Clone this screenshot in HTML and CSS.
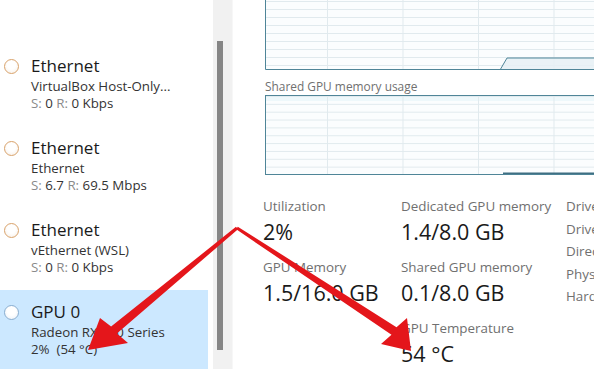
FILE: index.html
```html
<!DOCTYPE html>
<html lang="en">
<head>
    <meta charset="UTF-8">
    <meta name="viewport" content="width=device-width, initial-scale=1.0">
    <title>Task Manager - GPU</title>
    <link rel="stylesheet" href="styles.css">
</head>
<body>
    <div class="window">
        <!-- Device list -->
        <div class="sidebar">
            <div class="item">
                <span class="dot"></span>
                <div class="info">
                    <div class="name">Ethernet</div>
                    <div class="sub">VirtualBox Host-Only...</div>
                    <div class="sub"><span class="key">S:</span> 0 <span class="key">R:</span> 0 Kbps</div>
                </div>
            </div>
            <div class="item">
                <span class="dot"></span>
                <div class="info">
                    <div class="name">Ethernet</div>
                    <div class="sub">Ethernet</div>
                    <div class="sub"><span class="key">S:</span> 6.7 <span class="key">R:</span> 69.5 Mbps</div>
                </div>
            </div>
            <div class="item">
                <span class="dot"></span>
                <div class="info">
                    <div class="name">Ethernet</div>
                    <div class="sub">vEthernet (WSL)</div>
                    <div class="sub"><span class="key">S:</span> 0 <span class="key">R:</span> 0 Kbps</div>
                </div>
            </div>
            <div class="item selected">
                <span class="dot gpu"></span>
                <div class="info">
                    <div class="name">GPU 0</div>
                    <div class="sub">Radeon RX 580 Series</div>
                    <div class="sub">2%&nbsp; (54 °C)</div>
                </div>
            </div>
        </div>

        <div class="scrollbar"><div class="thumb"></div></div>

        <!-- GPU details -->
        <div class="details">
            <div class="graph first">
                <svg width="360" height="71" viewBox="0 0 360 71">
                    <defs>
                        <pattern id="grid1" patternUnits="userSpaceOnUse" x="62" y="1" width="75.5" height="8">
                            <path d="M0.5 0 V8 M0 0.5 H75.5" stroke="#e1eaee" stroke-width="1" fill="none"/>
                        </pattern>
                    </defs>
                    <rect x="0" y="0" width="360" height="70" fill="#fbfdfe"/>
                    <rect x="0" y="0" width="360" height="70" fill="url(#grid1)"/>
                    <polygon points="235,70 242,58 360,58 360,70" fill="#e6f0f5" fill-opacity="0.85"/>
                    <polyline points="235,70 242,58 360,58" fill="none" stroke="#4f8598" stroke-width="1"/>
                    <path d="M0.5 0 V69.5 H360" fill="none" stroke="#4f8598" stroke-width="1"/>
                </svg>
            </div>
            <div class="graph-label">Shared GPU memory usage</div>
            <div class="graph">
                <svg width="360" height="81" viewBox="0 0 360 81">
                    <defs>
                        <pattern id="grid2" patternUnits="userSpaceOnUse" x="62" y="1" width="75.5" height="7.85">
                            <path d="M0.5 0 V8 M0 0.5 H75.5" stroke="#e1eaee" stroke-width="1" fill="none"/>
                        </pattern>
                    </defs>
                    <rect x="0" y="0" width="360" height="80" fill="#fbfdfe"/>
                    <rect x="0" y="0" width="360" height="6" fill="#eef8fb"/>
                    <rect x="0" y="0" width="360" height="80" fill="url(#grid2)"/>
                    <line x1="238" y1="78.5" x2="360" y2="78.5" stroke="#3f6f82" stroke-width="2"/>
                    <rect x="0.5" y="0.5" width="380" height="79" fill="none" stroke="#4f8598" stroke-width="1"/>
                </svg>
            </div>

            <div class="stats">
                <div class="col first-col">
                    <div class="stat">
                        <div class="label">Utilization</div>
                        <div class="value">2%</div>
                    </div>
                    <div class="stat">
                        <div class="label">GPU Memory</div>
                        <div class="value">1.5/16.0 GB</div>
                    </div>
                </div>
                <div class="col second-col">
                    <div class="stat">
                        <div class="label">Dedicated GPU memory</div>
                        <div class="value">1.4/8.0 GB</div>
                    </div>
                    <div class="stat">
                        <div class="label">Shared GPU memory</div>
                        <div class="value">0.1/8.0 GB</div>
                    </div>
                    <div class="stat">
                        <div class="label">GPU Temperature</div>
                        <div class="value">54 °C</div>
                    </div>
                </div>
                <div class="props">
                    <div>Driver version:</div>
                    <div>Driver date:</div>
                    <div>DirectX version:</div>
                    <div>Physical location:</div>
                    <div>Hardware reserved memory:</div>
                </div>
            </div>
        </div>

        <!-- Annotation arrows drawn over the screenshot -->
        <svg class="arrows" width="594" height="369" viewBox="0 0 594 369">
            <polygon points="238,229.2 116.9,333.5 128,343 88,350 100,318 111.1,326.5 236,226.8" fill="#e4161b"/>
            <polygon points="237.8,226.7 396.5,327.2 407,318 411,351 381,344 391.5,334.8 236.2,229.3" fill="#e4161b"/>
        </svg>
    </div>
</body>
</html>
```

FILE: styles.css
```css
body {
    margin: 0;
    font-family: "Open Sans", "Noto Sans", sans-serif;
    background: #fff;
    color: #1a1a1a;
}
.window {
    position: relative;
    display: flex;
    width: 594px;
    height: 369px;
    overflow: hidden;
}
.sidebar {
    width: 213px;
    flex-shrink: 0;
    padding-top: 44px;
    box-sizing: border-box;
}
.item {
    display: flex;
    width: 208px;
    height: 82px;
    padding-top: 10px;
    box-sizing: border-box;
}
.item.selected {
    background: #cce8ff;
}
.dot {
    width: 13px;
    height: 13px;
    margin: 5px 0 0 4px;
    border: 1.5px solid #d9a36c;
    border-radius: 50%;
    background: radial-gradient(circle at 50% 40%, #fff 40%, #f6ede3 100%);
    flex-shrink: 0;
}
.dot.gpu {
    border-color: #8aaed0;
    background: radial-gradient(circle at 50% 40%, #fff 40%, #e7eef6 100%);
}
.info {
    margin-left: 12px;
}
.name {
    font-size: 17px;
    line-height: 24px;
    color: #1a1a1a;
}
.sub {
    font-size: 13.3px;
    line-height: 17px;
    color: #333;
    white-space: nowrap;
}
.key {
    color: #8a8a8a;
}
.scrollbar {
    width: 19px;
    flex-shrink: 0;
    background: #f1f1f1;
    border-right: 1px solid #f7f7f7;
}
.thumb {
    width: 6px;
    height: 309px;
    margin: 41px 0 0 4px;
    background: #868686;
}
.details {
    flex: 1;
    padding-left: 32px;
    overflow: hidden;
}
.graph {
    height: 81px;
    width: 360px;
}
.graph.first {
    height: 71px;
}
.graph svg {
    display: block;
}
.graph-label {
    margin-top: 7px;
    font-size: 11.9px;
    line-height: 17px;
    color: #707070;
}
.stats {
    display: flex;
    margin-top: 21px;
    margin-left: -2px;
}
.col {
    flex-shrink: 0;
}
.first-col {
    width: 138px;
}
.second-col {
    width: 165px;
}
.stat {
    margin-bottom: 11px;
}
.label {
    font-size: 13.4px;
    line-height: 18px;
    color: #707070;
    white-space: nowrap;
}
.value {
    margin-top: 2px;
    font-size: 21.5px;
    line-height: 30px;
    color: #1a1a1a;
    white-space: nowrap;
}
.props {
    margin-top: -2px;
    font-size: 13.4px;
    line-height: 22.5px;
    color: #707070;
    white-space: nowrap;
}
.arrows {
    position: absolute;
    left: 0;
    top: 0;
    pointer-events: none;
}
```
